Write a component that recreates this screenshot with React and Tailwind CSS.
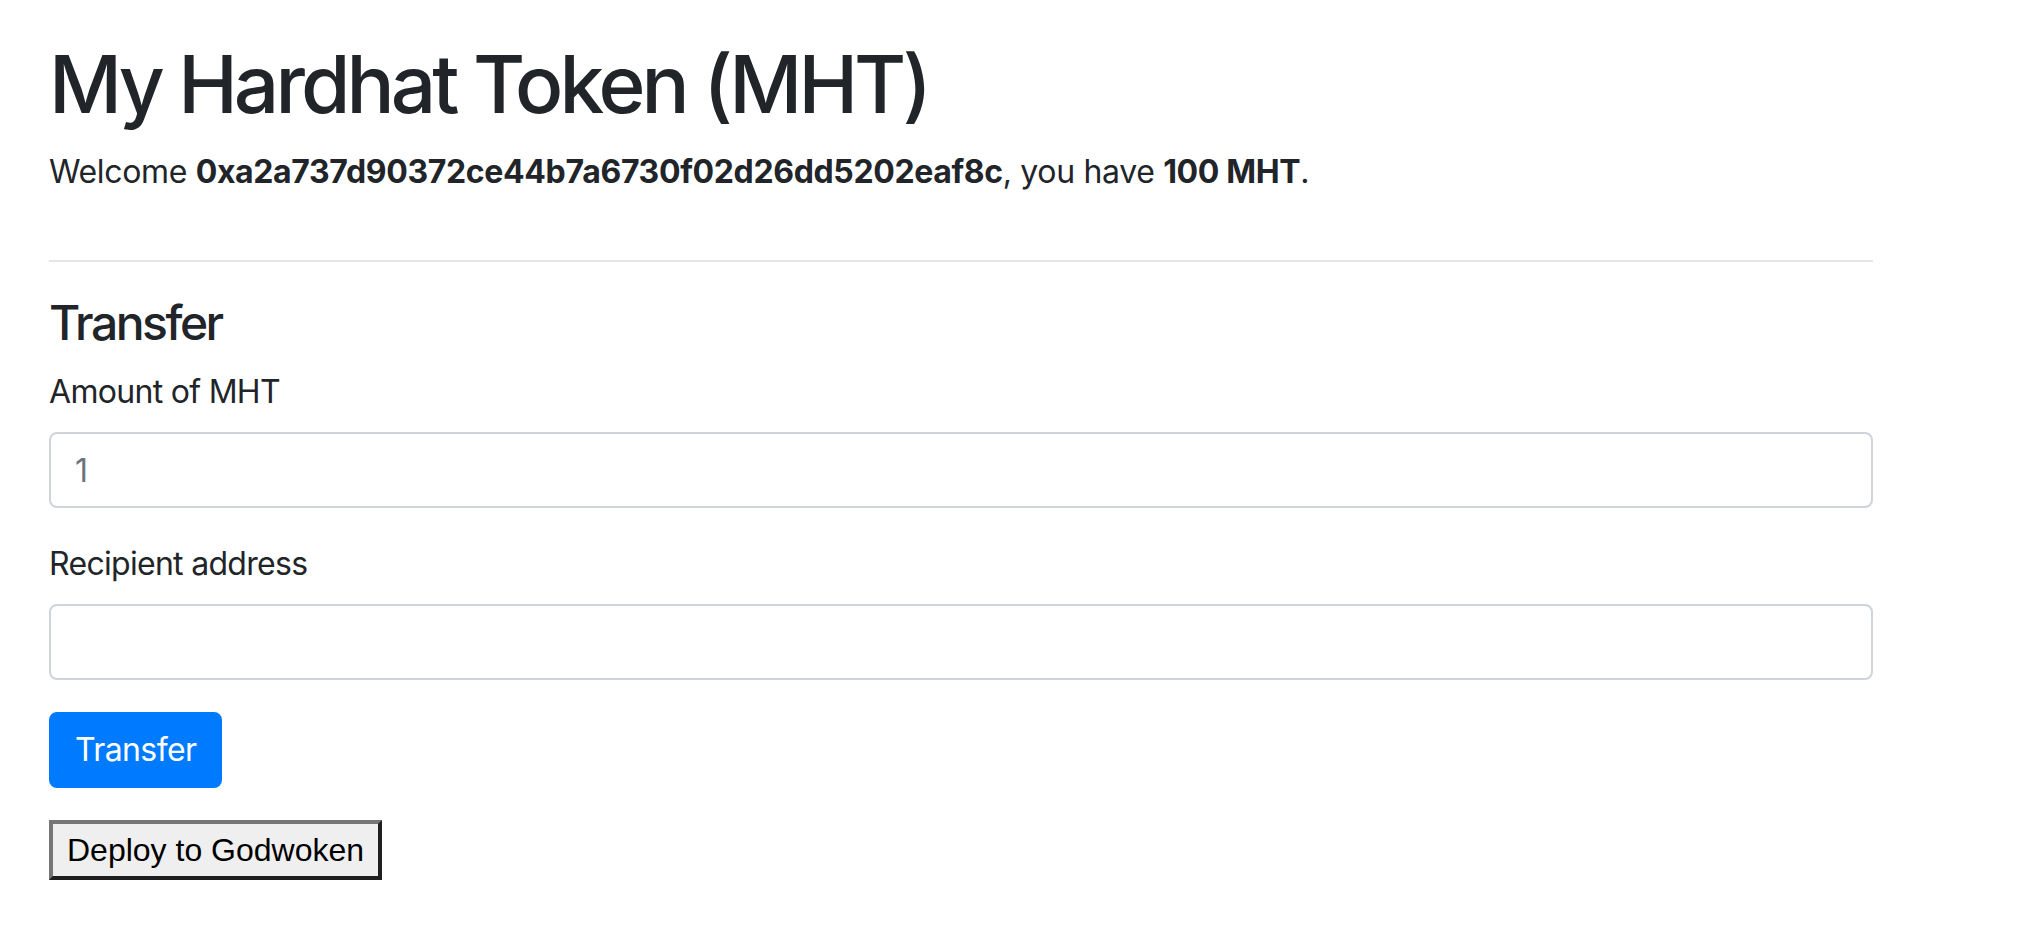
export default function App() {
  return (
    <div
      className="min-h-[928px] bg-white px-[49px] pt-[36px] text-[#212529]"
      style={{ fontFamily: 'Inter, "Noto Sans", sans-serif' }}
    >
      <div className="max-w-[1824px]">
        <h1 className="mb-[16px] text-[80px] font-medium leading-[96px] tracking-[-3.9px]">My Hardhat Token (MHT)</h1>
        <p className="text-[32px] leading-[48px] tracking-[-0.35px]">
          Welcome <b className="font-bold">0xa2a737d90372ce44b7a6730f02d26dd5202eaf8c</b>, you have{" "}
          <b className="font-bold">100 MHT</b>.
        </p>
        <hr className="mt-[64px] mb-[32px] border-0 border-t-2 border-[#e6e6e6]" />
        <h4 className="mb-[16px] text-[48px] font-medium leading-[58px] tracking-[-2.5px]">Transfer</h4>
        <form onSubmit={(e) => e.preventDefault()}>
          <div className="mb-[32px]">
            <label className="mb-[16px] inline-block text-[32px] leading-[48px] tracking-[-0.7px]">Amount of MHT</label>
            <input
              type="number"
              placeholder="1"
              className="block h-[76px] w-full rounded-[8px] border-2 border-[#ced4da] bg-white px-[24px] text-[32px] leading-[48px] text-[#495057] placeholder:text-[#6c757d] outline-none"
            />
          </div>
          <div className="mb-[32px]">
            <label className="mb-[16px] inline-block text-[32px] leading-[48px] tracking-[-0.7px]">Recipient address</label>
            <input
              type="text"
              className="block h-[76px] w-full rounded-[8px] border-2 border-[#ced4da] bg-white px-[24px] text-[32px] leading-[48px] text-[#495057] outline-none"
            />
          </div>
          <div>
            <button
              type="submit"
              className="rounded-[8px] border-2 border-[#007bff] bg-[#007bff] px-[24px] py-[12px] text-[32px] leading-[48px] tracking-[-0.6px] text-white"
            >
              Transfer
            </button>
          </div>
        </form>
        <button
          className="mt-[32px] h-[60px] border-[4px] border-solid border-t-[#767676] border-l-[#767676] border-r-[#1f1f1f] border-b-[#1f1f1f] bg-[#efefef] px-[14px] text-[32px] leading-[36px] text-black"
          style={{ fontFamily: '"Liberation Sans", Arial, sans-serif' }}
        >
          Deploy to Godwoken
        </button>
      </div>
    </div>
  );
}
